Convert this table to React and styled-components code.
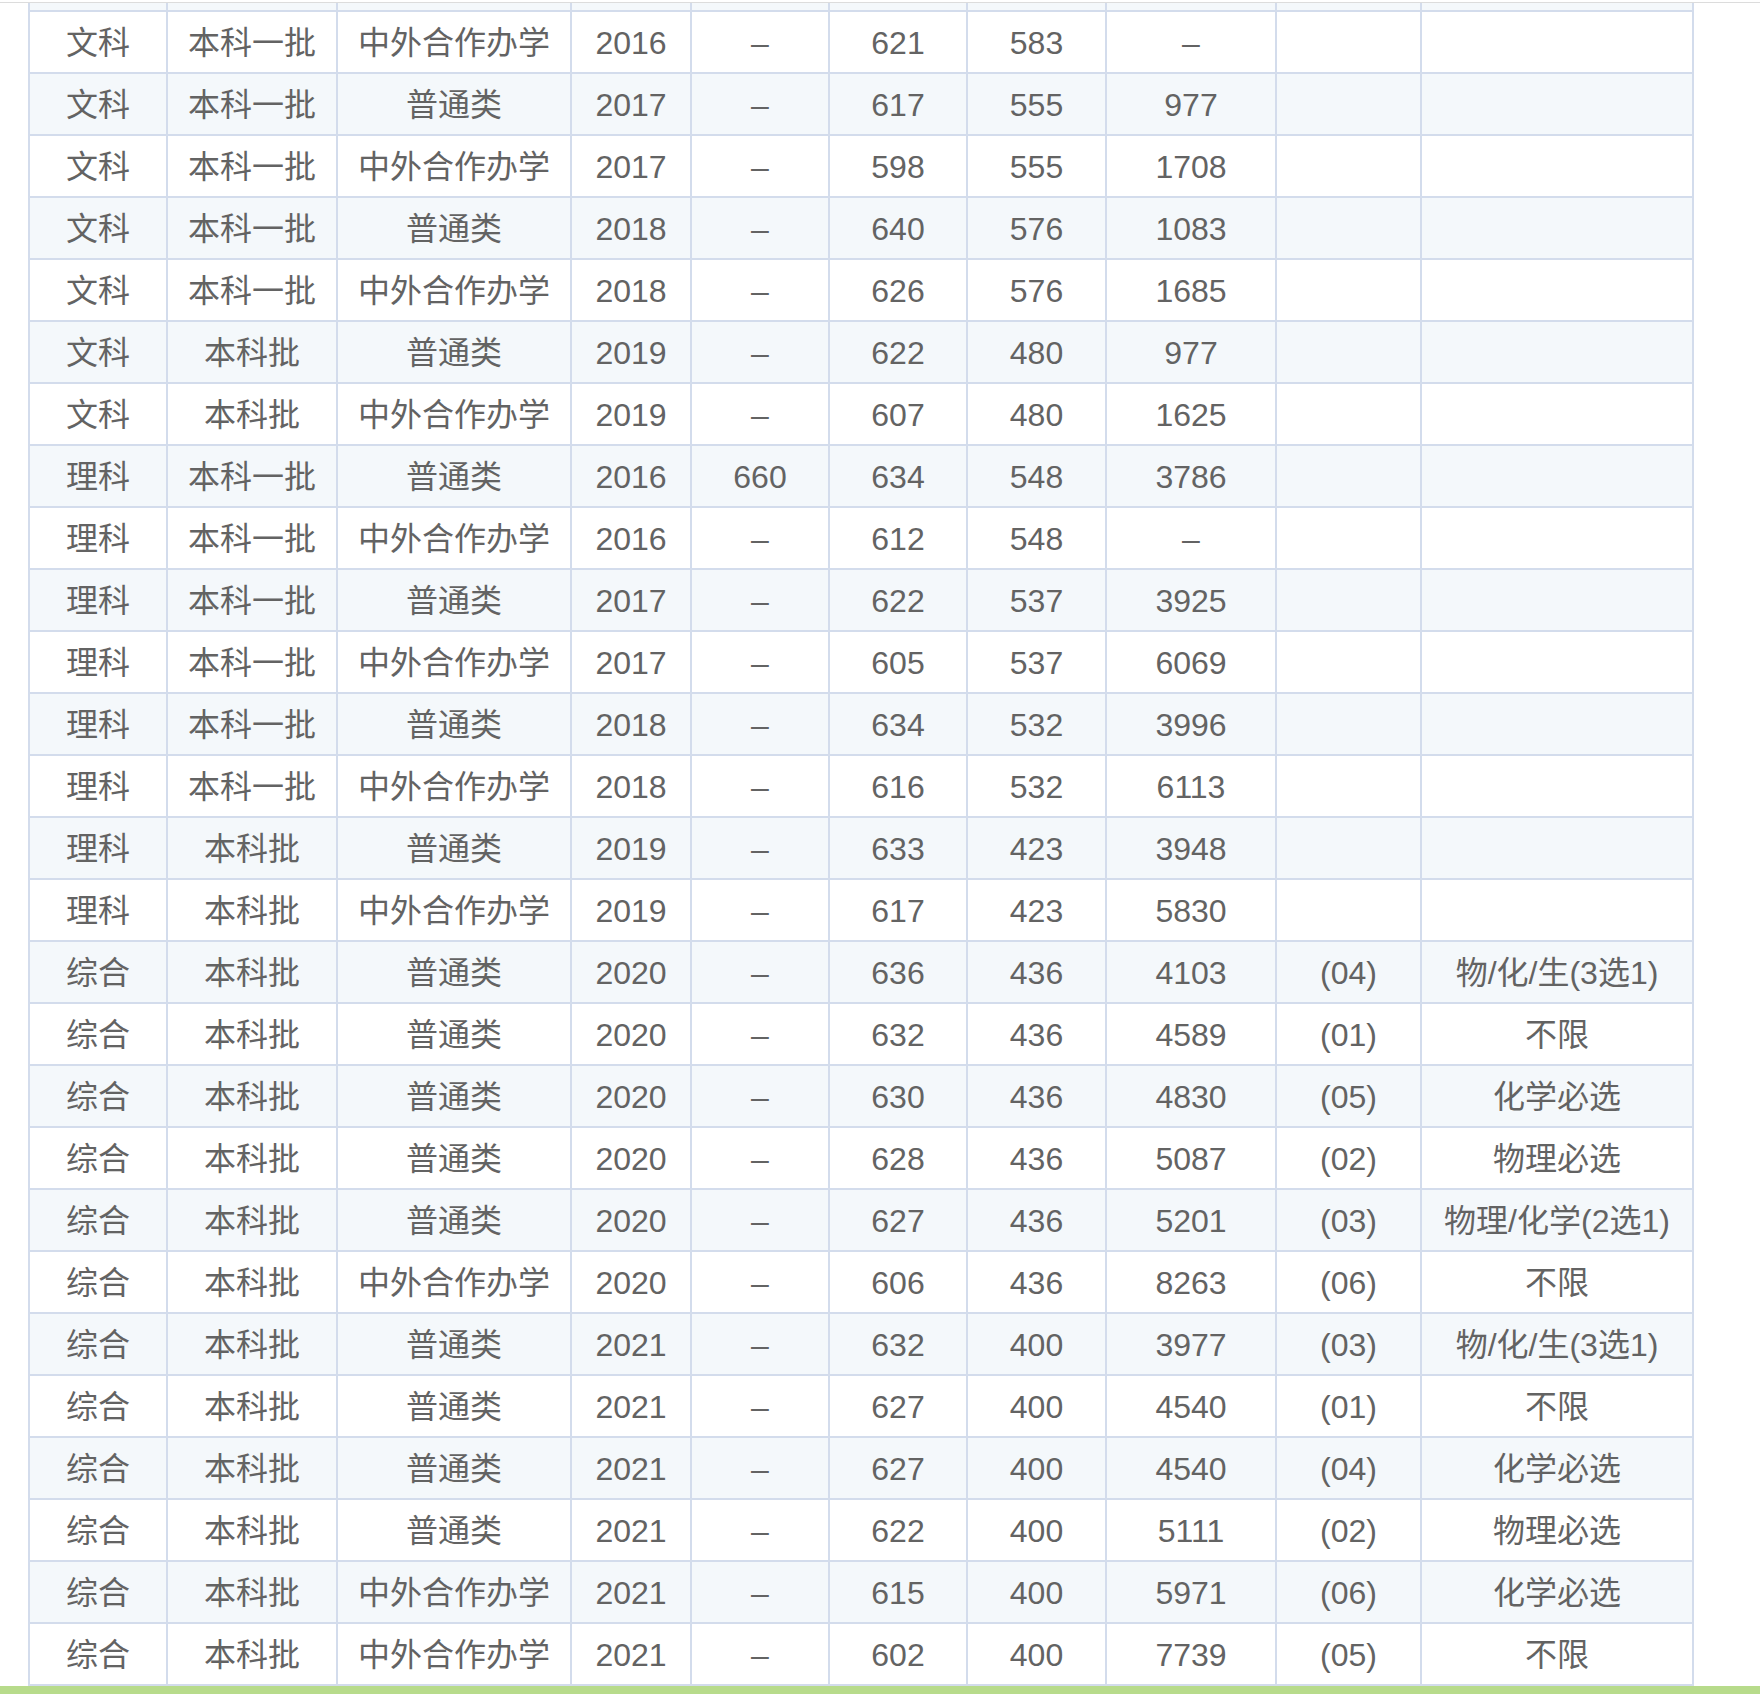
import React from 'react';
import styled, { createGlobalStyle } from 'styled-components';

const GlobalStyle = createGlobalStyle`
  html, body {
    margin: 0;
    padding: 0;
    background: #fff;
  }
  body {
    width: 1760px;
    height: 1694px;
    overflow: hidden;
  }
`;

const Page = styled.div`
  padding-top: 2px;
  font-family: "Liberation Sans", "Noto Sans CJK SC", sans-serif;
`;

const Frame = styled.div`
  border-top: 1px solid #dcdcdc;
  padding-left: 28px;
`;

const Table = styled.table`
  table-layout: fixed;
  width: 1666px;
  border-collapse: separate;
  border-spacing: 0;
  border-left: 2px solid #d3dcec;
`;

const Row = styled.tr`
  background: ${(p) => (p.$striped ? '#f4f8fb' : '#fff')};
`;

const Cell = styled.td`
  padding: 3px 0 0;
  height: 57px;
  line-height: 57px;
  font-size: 32px;
  color: #636363;
  text-align: center;
  white-space: nowrap;
  border-right: 2px solid #d3dcec;
  border-bottom: 2px solid #d3dcec;
`;

const StubCell = styled(Cell)`
  padding: 0;
  height: 7px;
  line-height: 0;
  font-size: 0;
`;

const GreenBar = styled.div`
  height: 8px;
  background: #b7db8b;
`;

const widths = [138, 170, 234, 120, 138, 138, 139, 170, 145, 272];

const D = '–';

const rows = [
  ['文科', '本科一批', '中外合作办学', '2016', D, '621', '583', D, '', ''],
  ['文科', '本科一批', '普通类', '2017', D, '617', '555', '977', '', ''],
  ['文科', '本科一批', '中外合作办学', '2017', D, '598', '555', '1708', '', ''],
  ['文科', '本科一批', '普通类', '2018', D, '640', '576', '1083', '', ''],
  ['文科', '本科一批', '中外合作办学', '2018', D, '626', '576', '1685', '', ''],
  ['文科', '本科批', '普通类', '2019', D, '622', '480', '977', '', ''],
  ['文科', '本科批', '中外合作办学', '2019', D, '607', '480', '1625', '', ''],
  ['理科', '本科一批', '普通类', '2016', '660', '634', '548', '3786', '', ''],
  ['理科', '本科一批', '中外合作办学', '2016', D, '612', '548', D, '', ''],
  ['理科', '本科一批', '普通类', '2017', D, '622', '537', '3925', '', ''],
  ['理科', '本科一批', '中外合作办学', '2017', D, '605', '537', '6069', '', ''],
  ['理科', '本科一批', '普通类', '2018', D, '634', '532', '3996', '', ''],
  ['理科', '本科一批', '中外合作办学', '2018', D, '616', '532', '6113', '', ''],
  ['理科', '本科批', '普通类', '2019', D, '633', '423', '3948', '', ''],
  ['理科', '本科批', '中外合作办学', '2019', D, '617', '423', '5830', '', ''],
  ['综合', '本科批', '普通类', '2020', D, '636', '436', '4103', '(04)', '物/化/生(3选1)'],
  ['综合', '本科批', '普通类', '2020', D, '632', '436', '4589', '(01)', '不限'],
  ['综合', '本科批', '普通类', '2020', D, '630', '436', '4830', '(05)', '化学必选'],
  ['综合', '本科批', '普通类', '2020', D, '628', '436', '5087', '(02)', '物理必选'],
  ['综合', '本科批', '普通类', '2020', D, '627', '436', '5201', '(03)', '物理/化学(2选1)'],
  ['综合', '本科批', '中外合作办学', '2020', D, '606', '436', '8263', '(06)', '不限'],
  ['综合', '本科批', '普通类', '2021', D, '632', '400', '3977', '(03)', '物/化/生(3选1)'],
  ['综合', '本科批', '普通类', '2021', D, '627', '400', '4540', '(01)', '不限'],
  ['综合', '本科批', '普通类', '2021', D, '627', '400', '4540', '(04)', '化学必选'],
  ['综合', '本科批', '普通类', '2021', D, '622', '400', '5111', '(02)', '物理必选'],
  ['综合', '本科批', '中外合作办学', '2021', D, '615', '400', '5971', '(06)', '化学必选'],
  ['综合', '本科批', '中外合作办学', '2021', D, '602', '400', '7739', '(05)', '不限'],
];

const App = () => {
  return (
    <Page>
      <GlobalStyle />
      <Frame>
        <Table>
          <colgroup>
            {widths.map((w, i) => (
              <col key={i} style={{ width: w }} />
            ))}
          </colgroup>
          <tbody>
            {/* tail of the row scrolled out above */}
            <Row $striped>
              {widths.map((w, i) => (
                <StubCell key={i} />
              ))}
            </Row>
            {rows.map((r, i) => (
              <Row key={i} $striped={i % 2 === 1}>
                {r.map((v, j) => (
                  <Cell key={j}>{v}</Cell>
                ))}
              </Row>
            ))}
          </tbody>
        </Table>
      </Frame>
      <GreenBar />
    </Page>
  );
};

export default App;
